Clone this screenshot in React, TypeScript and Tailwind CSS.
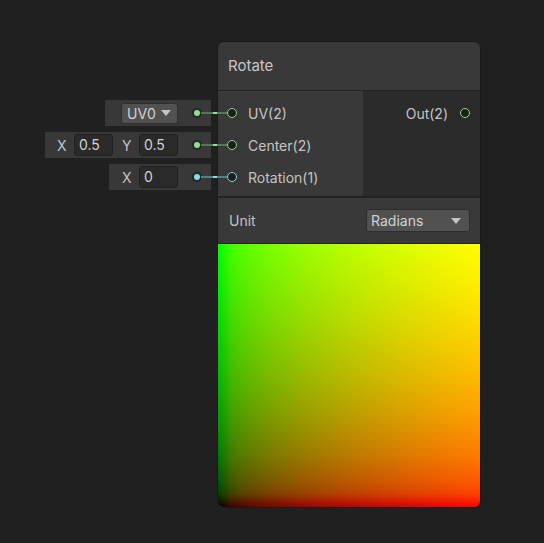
import React from "react";

type PortKind = "vec2" | "vec1";

function Arrow() {
  return (
    <svg width="10" height="6" viewBox="0 0 10 6" className="shrink-0">
      <path d="M0 0 L10 0 L5 6 Z" fill="#c4c4c4" />
    </svg>
  );
}

function Field({ value }: { value: string }) {
  return (
    <div className="h-[22px] w-[39px] shrink-0 rounded-[3px] border border-[#212121] bg-[#2a2a2a] pl-[4px] text-[14px] leading-[20px] text-[#d2d2d2]">
      {value}
    </div>
  );
}

// the little dot on the input widget and the wire running into the port
function Wire({ kind }: { kind: PortKind }) {
  const dot = kind === "vec2" ? "bg-[#8fe08f]" : "bg-[#84e0e4]";
  const line = kind === "vec2" ? "bg-[#507a50]" : "bg-[#4a8487]";
  const bright = kind === "vec2" ? "bg-[#8fe08f]" : "bg-[#84e0e4]";
  return (
    <>
      <div className="ml-[14px] flex h-[10px] w-[10px] shrink-0 items-center justify-center rounded-full bg-[#262626]">
        <div className={`h-[6px] w-[6px] rounded-full ${dot}`} />
      </div>
      <div className={`absolute right-[-10px] top-1/2 z-10 h-[2px] w-[26px] -translate-y-1/2 ${line}`}>
        <div className={`absolute left-[12px] top-0 h-[2px] w-[4px] ${bright}`} />
      </div>
    </>
  );
}

function PortCircle({ kind }: { kind: PortKind }) {
  const ring = kind === "vec2" ? "border-[#8fd88f]" : "border-[#84d8dc]";
  return (
    <div className={`h-[10px] w-[10px] shrink-0 rounded-full border-[1.5px] bg-[#1e1e1e] ${ring}`} />
  );
}

function InputPort({ kind, label }: { kind: PortKind; label: string }) {
  return (
    <div className="flex h-8 items-center pl-[9px]">
      <PortCircle kind={kind} />
      <span className="ml-[11px] text-[14px] text-[#c4c4c4]">{label}</span>
    </div>
  );
}

export default function App() {
  return (
    <div className="relative h-[543px] w-[544px] overflow-hidden bg-[#202020] font-['Inter',sans-serif]">
      <div className="absolute left-[46px] top-[41px] flex items-start">
        {/* inline input widgets */}
        <div className="flex w-[171px] flex-col pt-[56px]">
          <div className="relative flex h-8 items-center justify-end pr-[6px]">
            <div className="flex h-[26px] items-center bg-[#383838] pl-[16px] pr-[9px]">
              <div className="flex h-[21px] w-[57px] items-center justify-between rounded-[3px] border border-[#2e2e2e] bg-[#515151] pl-[5px] pr-[6px] text-[14px] text-[#d2d2d2]">
                <span>UV0</span>
                <Arrow />
              </div>
              <Wire kind="vec2" />
            </div>
          </div>
          <div className="relative flex h-8 items-center justify-end pr-[6px]">
            <div className="flex h-[26px] items-center bg-[#383838] pr-[9px] text-[14px] text-[#c4c4c4]">
              <span className="w-[29px] pl-[12px]">X</span>
              <Field value="0.5" />
              <span className="w-[26px] pl-[9px]">Y</span>
              <Field value="0.5" />
              <Wire kind="vec2" />
            </div>
          </div>
          <div className="relative flex h-8 items-center justify-end pr-[6px]">
            <div className="flex h-[26px] items-center bg-[#383838] pr-[9px] text-[14px] text-[#c4c4c4]">
              <span className="w-[30px] pl-[13px]">X</span>
              <Field value="0" />
              <Wire kind="vec1" />
            </div>
          </div>
        </div>

        {/* node */}
        <div className="w-[264px] overflow-hidden rounded-[7px] border border-[#191919] bg-[#393939]">
          <div className="flex h-[49px] items-center border-b border-[#232323] px-[10px] text-[15px] text-[#c8c8c8]">
            Rotate
          </div>
          <div className="flex">
            <div className="w-[145px] bg-[#393939] pb-[3px] pt-[6px]">
              <InputPort kind="vec2" label="UV(2)" />
              <InputPort kind="vec2" label="Center(2)" />
              <InputPort kind="vec1" label="Rotation(1)" />
            </div>
            <div className="flex-1 bg-[#2b2b2b] pt-[6px]">
              <div className="flex h-8 items-center justify-end gap-[12px] pr-[10px]">
                <span className="text-[14px] text-[#c4c4c4]">Out(2)</span>
                <PortCircle kind="vec2" />
              </div>
            </div>
          </div>
          <div className="flex h-[47px] items-center justify-between border-t-2 border-[#232323] pl-[11px] pr-[10px]">
            <span className="text-[14px] text-[#c4c4c4]">Unit</span>
            <div className="flex h-[23px] w-[104px] items-center justify-between rounded-[3px] border border-[#2e2e2e] bg-[#515151] pl-[4px] pr-[8px] text-[14px] text-[#d2d2d2]">
              <span>Radians</span>
              <Arrow />
            </div>
          </div>
          <div className="h-[264px] border-t border-[#232323] bg-[linear-gradient(to_right,#000_0%,#410000_5%,#5a0000_10%,#7b0000_20%,#9e0000_35%,#ba0000_50%,#d90000_70%,#ed0000_85%,#f00_100%),linear-gradient(to_bottom,#0f0_0%,#00ed00_15%,#00d900_30%,#00ba00_50%,#009e00_65%,#007b00_80%,#005a00_90%,#004100_95%,#000_100%)] bg-blend-screen" />
        </div>
      </div>
    </div>
  );
}
